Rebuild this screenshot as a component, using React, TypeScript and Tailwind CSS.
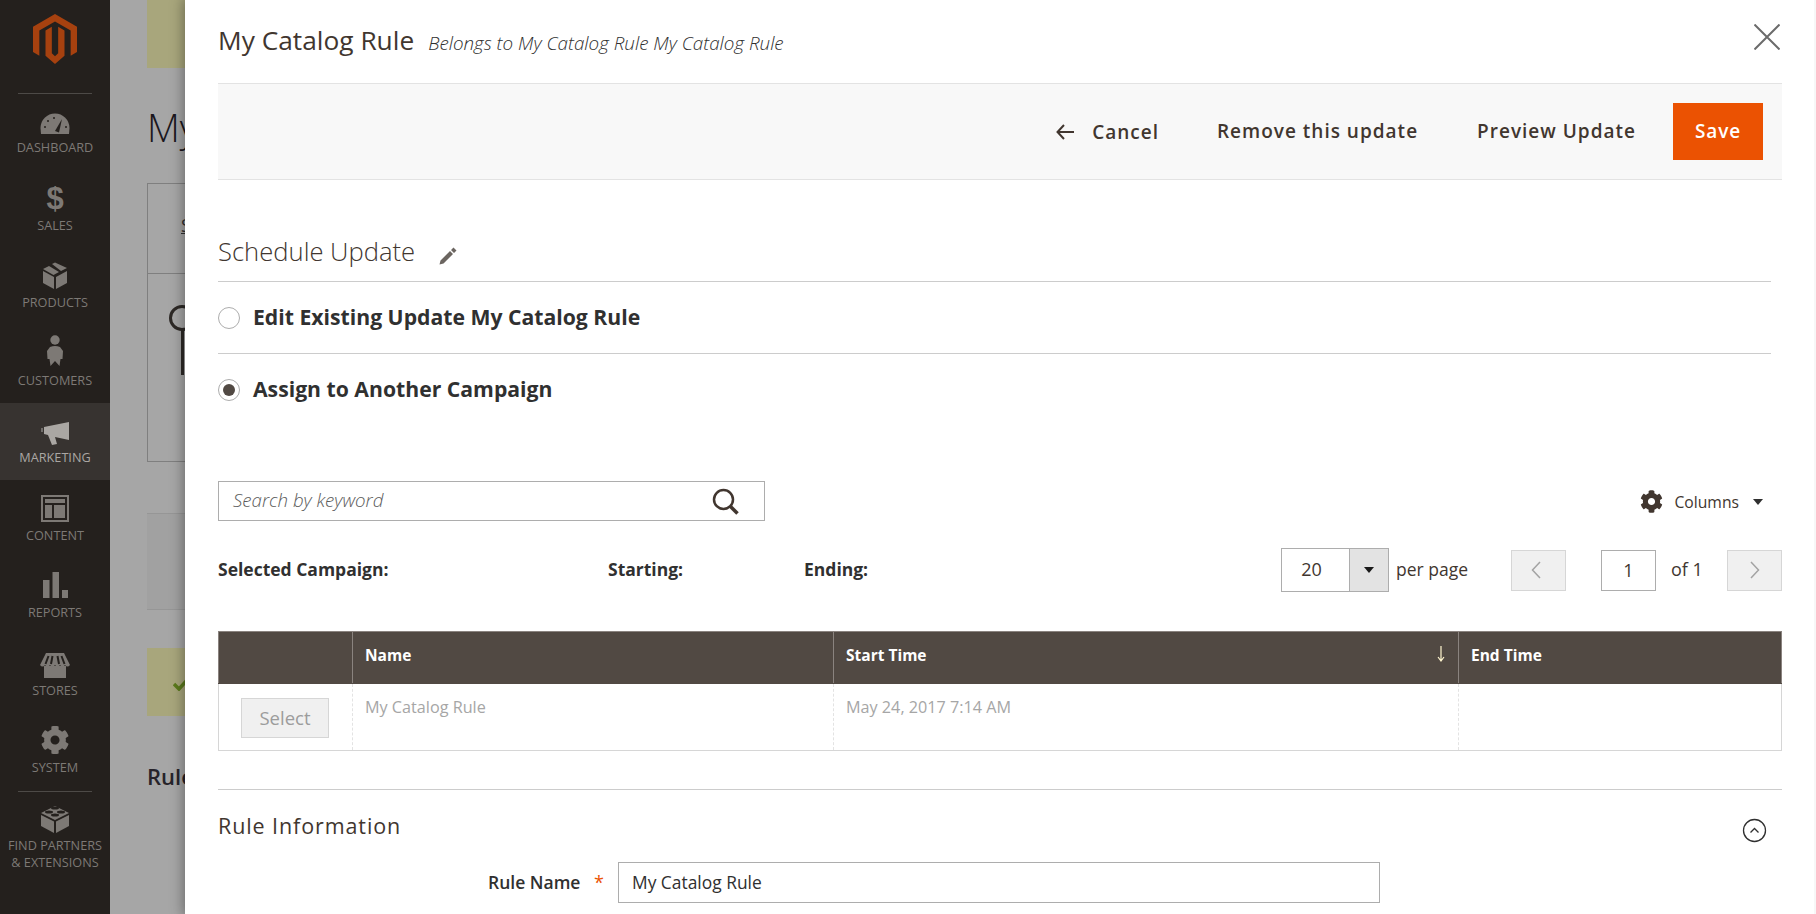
import React from "react";
import { FaCog } from "react-icons/fa";

const G = "#7d7975";
const BG = "#24201d";

function Ico({ h, children }: { h: number; children: React.ReactNode }) {
  return (
    <svg width="40" height={h} viewBox={`0 0 40 ${h}`} className="block shrink-0">
      {children}
    </svg>
  );
}

const items: { label: string; h: string; ih: number; icon: React.ReactNode; active?: boolean }[] = [
  {
    label: "Dashboard",
    h: "h-[77px]",
    ih: 45,
    icon: (
      <g>
        <path d="M6 40 L5.500 34 A14.500 14.500 0 0 1 34.500 34 L34 40 Z" fill={G} />
        <path d="M20 37 L27 25 L24 38.500 Z" fill={BG} />
        <circle cx="10" cy="33" r="1" fill={BG} />
        <circle cx="13" cy="27" r="1" fill={BG} />
        <circle cx="19" cy="24" r="1" fill={BG} />
        <circle cx="31" cy="33" r="1" fill={BG} />
      </g>
    ),
  },
  {
    label: "Sales",
    h: "h-[77px]",
    ih: 46,
    icon: (
      <text x="20" y="38" textAnchor="middle" fontSize="31" fontWeight="700" fontFamily="'Liberation Sans',sans-serif" fill={G}>
        $
      </text>
    ),
  },
  {
    label: "Products",
    h: "h-[78px]",
    ih: 46,
    icon: (
      <g fill={G}>
        <polygon points="8,21 14,18 24,24 18.500,27" />
        <polygon points="17,16 20,14.500 32,20 26,23" />
        <polygon points="8,23 19,29 19,41 8,35" />
        <polygon points="21,29 32,23 32,35 21,41" />
      </g>
    ),
  },
  {
    label: "Customers",
    h: "h-[77px]",
    ih: 46,
    icon: (
      <g fill={G}>
        <circle cx="20" cy="14" r="4.700" />
        <path d="M15 21 Q20 19 25 21 L28 25 L27.500 33 L25.500 33 L24.500 40 L20 35 L15.500 40 L14.500 33 L12.500 33 L12 25 Z" />
      </g>
    ),
  },
  {
    label: "Marketing",
    h: "h-[77px]",
    ih: 46,
    active: true,
    icon: (
      <g fill="#aaa7a3" transform="translate(5 0)">
        <polygon points="1.500,29 1.500,25 2.500,25 2.500,29" />
        <polygon points="4,24 29,19 29,37 15,34 17,41 12,42 8,32 4,31" />
      </g>
    ),
  },
  {
    label: "Content",
    h: "h-[77px]",
    ih: 47,
    icon: (
      <g fill={G}>
        <path fillRule="evenodd" d="M6 15 H34 V42 H6 Z M8 17 V40 H32 V17 Z" />
        <rect x="10" y="19" width="20" height="4" />
        <rect x="10" y="25" width="7" height="13" />
        <rect x="19" y="25" width="11" height="13" />
      </g>
    ),
  },
  {
    label: "Reports",
    h: "h-[77px]",
    ih: 47,
    icon: (
      <g fill={G}>
        <rect x="8" y="23" width="6.500" height="18" />
        <rect x="17.500" y="15" width="6.500" height="26" />
        <rect x="27" y="33" width="6" height="8" />
      </g>
    ),
  },
  {
    label: "Stores",
    h: "h-[77px]",
    ih: 48,
    icon: (
      <g>
        <polygon points="9,32 31,32 31,44 9,44" fill={G} />
        <path d="M11 19 H29 L35 31 Q32.500 34 30 31 Q27.500 34 25 31 Q22.500 34 20 31 Q17.500 34 15 31 Q12.500 34 10 31 Q7.500 34 5 31 Z" fill={G} />
        <path d="M13.500 22 L10.500 30 M17.500 22 L16 30 M22.500 22 L24 30 M26.500 22 L29.500 30" stroke={BG} strokeWidth="2" fill="none" />
      </g>
    ),
  },
  {
    label: "System",
    h: "h-[77px]",
    ih: 48,
    icon: <FaCog x={5.500} y={14.500} size={29} color={G} />,
  },
];

function Sidebar() {
  return (
    <aside className="w-[110px] shrink-0 h-full bg-[#24201d] flex flex-col">
      <div className="h-[94px] flex flex-col items-center">
        <svg width="44" height="50" viewBox="0 0 25 28.400" className="mt-[14px] block">
          <path fill="#a6410f" d="M12.500 0 L25 7.200 V21.600 L21.400 23.700 V9.300 L12.500 4.200 L3.600 9.300 V23.700 L0 21.600 V7.200 Z" />
          <path fill="#a6410f" d="M14.300 7.200 L17.900 9.300 V23.700 L12.500 28.400 L7.100 23.700 V9.300 L10.700 7.200 V22.300 L12.500 24 L14.300 22.300 Z" />
        </svg>
        <div className="mt-[29px] w-[74px] h-px bg-[#4d4a47]" />
      </div>
      {items.map((it) => (
        <div key={it.label} className={`${it.h} flex flex-col items-center ${it.active ? "bg-[#373330]" : ""}`}>
          <Ico h={it.ih}>{it.icon}</Ico>
          <span className={`text-[12.700px] leading-[17px] uppercase ${it.active ? "text-[#aaa7a3]" : "text-[#7d7975]"}`}>{it.label}</span>
        </div>
      ))}
      <div className="mx-auto mt-[3px] w-[74px] h-px bg-[#4d4a47]" />
      <svg width="30" height="30" viewBox="0 0 30 30" className="mx-auto mt-[11px] block">
        <g fill={G}>
          <polygon points="1,10 15,3 29,10 15,17" />
          <polygon points="1,12 14,18.500 14,30 1,23" />
          <polygon points="16,18.500 29,12 29,23 16,30" />
        </g>
        <g fill={BG}>
          <ellipse cx="15" cy="5" rx="4" ry="1.500" />
          <ellipse cx="9" cy="9" rx="4" ry="1.500" />
          <ellipse cx="21" cy="9" rx="4" ry="1.500" />
          <ellipse cx="15" cy="12" rx="4" ry="1.500" />
        </g>
      </svg>
      <div className="text-[12.700px] leading-[17px] text-[#7d7975] text-center mt-[4px]">
        FIND PARTNERS
        <br />
        &amp; EXTENSIONS
      </div>
    </aside>
  );
}

function Backdrop() {
  return (
    <div className="w-[75px] shrink-0 h-full bg-[#a6a6a6] overflow-hidden pl-[37px]">
      <div className="w-[200px] h-[68px] bg-[#a8a67c]" />
      <div className="mt-[36px] text-[38px] leading-[46px] font-light text-[#1a171d] whitespace-nowrap">My Catalog</div>
      <div className="mt-[33px] w-[200px] h-[279px] border border-[#7f7f7f]">
        <div className="h-[90px] border-b border-[#7f7f7f] pl-[33px] pt-[29px] text-[18px] leading-[24px] text-[#303030] underline">
          Schedule
        </div>
        <svg width="38" height="70" viewBox="0 0 38 70" className="ml-[18px] mt-[31px] block">
          <circle cx="16" cy="13" r="11.500" fill="none" stroke="#2d2926" strokeWidth="3" />
          <rect x="15" y="24" width="3" height="60" fill="#2d2926" />
        </svg>
      </div>
      <div className="mt-[51px] w-[200px] h-[97px] bg-[#a1a1a1] border-y border-[#969696]" />
      <div className="mt-[38px] w-[200px] h-[68px] bg-[#a8a67c] pl-[26px] pt-[29px]">
        <svg width="16" height="14" viewBox="0 0 16 14" className="block">
          <path d="M1 7 L6 12 L15 2" fill="none" stroke="#5b7a1c" strokeWidth="3.500" />
        </svg>
      </div>
      <div className="mt-[47px] text-[22px] leading-[27px] font-semibold text-[#26232a] whitespace-nowrap">Rule Information</div>
    </div>
  );
}

function TextBtn({ children }: { children: React.ReactNode }) {
  return <span className="text-[19px] font-semibold tracking-[1px] text-[#41362f] leading-[24px]">{children}</span>;
}

function Modal() {
  return (
    <main className="relative z-10 flex-1 min-w-0 h-full bg-white shadow-[0_0_12px_2px_rgba(0,0,0,0.35)] border-r-2 border-r-[#f7f7f7] pl-[33px] pr-[32px] text-[#303030]">
      <header className="h-[83px] flex items-start justify-between">
        <div className="flex items-baseline pt-[23px]">
          <span className="text-[26.300px] leading-[35px] font-normal text-[#41362f]">My Catalog Rule</span>
          <span className="ml-[14px] text-[18.800px] leading-[24px] italic font-light text-[#303030]">
            Belongs to My Catalog Rule My Catalog Rule
          </span>
        </div>
        <svg width="26" height="26" viewBox="0 0 26 26" className="mt-[24px] mr-[2px] block">
          <path d="M0.500 0.500 L25.500 25.500 M25.500 0.500 L0.500 25.500" stroke="#6b6b6b" strokeWidth="2" fill="none" />
        </svg>
      </header>

      <div className="h-[97px] bg-[#f8f8f8] border-y border-[#e3e3e3] flex items-center justify-end pr-[19px]">
        <svg width="19" height="16" viewBox="0 0 19 16" className="block mr-[17px]">
          <path d="M8 1 L1.500 8 L8 15 M2 8 H18" stroke="#41362f" strokeWidth="2" fill="none" />
        </svg>
        <TextBtn>Cancel</TextBtn>
        <span className="ml-[58px]">
          <TextBtn>Remove this update</TextBtn>
        </span>
        <span className="ml-[59px]">
          <TextBtn>Preview Update</TextBtn>
        </span>
        <button className="ml-[37px] w-[90px] h-[57px] bg-[#eb5202] text-white text-[19px] font-semibold tracking-[0.9px]">Save</button>
      </div>

      <div className="mr-[11px]">
        <div className="h-[102px] border-b border-[#cccccc] flex items-end pb-[13px]">
          <span className="text-[25.600px] leading-[32px] font-light text-[#41362f]">Schedule Update</span>
          <svg width="18" height="18" viewBox="0 0 18 18" className="ml-[24px] mb-[3px] block">
            <path d="M0.500 17.500 L1.500 13.500 L11 4 L14 7 L4.500 16.500 Z M12 3 L14.500 0.500 L17.500 3.500 L15 6 Z" fill="#6b6560" />
          </svg>
        </div>
        <label className="h-[72px] border-b border-[#cccccc] flex items-center">
          <span className="w-[22px] h-[22px] rounded-full border border-[#adadad] bg-white shrink-0" />
          <span className="ml-[13px] pb-[2px] text-[21.200px] font-bold text-[#303030]">Edit Existing Update My Catalog Rule</span>
        </label>
        <label className="h-[71px] flex items-center">
          <span className="w-[22px] h-[22px] rounded-full border border-[#adadad] bg-white shrink-0 flex items-center justify-center">
            <span className="w-[12px] h-[12px] rounded-full bg-[#514943]" />
          </span>
          <span className="ml-[13px] pb-[2px] text-[21.200px] font-bold text-[#303030]">Assign to Another Campaign</span>
        </label>
      </div>

      <div className="mt-[56px] h-[40px] flex items-start justify-between">
        <div className="w-[547px] h-[40px] border border-[#adadad] flex items-center justify-between pl-[14px] pr-[25px]">
          <span className="pb-[2px] text-[18.700px] italic font-light text-[#5b5b5b]">Search by keyword</span>
          <svg width="27" height="27" viewBox="0 0 27 27" className="block">
            <circle cx="11.500" cy="11.500" r="9.500" fill="none" stroke="#41362f" strokeWidth="2.500" />
            <path d="M18 18 L25.500 25.500" stroke="#41362f" strokeWidth="3.500" />
          </svg>
        </div>
        <div className="flex items-center pr-[19px] mt-[9px]">
          <FaCog size={23} color="#41362f" />
          <span className="ml-[11px] text-[15.700px] leading-[22px] text-[#41362f]">Columns</span>
          <span className="ml-[14px] w-0 h-0 border-x-[5px] border-x-transparent border-t-[6px] border-t-[#303030]" />
        </div>
      </div>

      <div className="mt-[27px] h-[44px] flex items-center">
        <span className="w-[390px] pb-[2px] text-[17.500px] font-bold">Selected Campaign:</span>
        <span className="w-[196px] pb-[2px] text-[17.500px] font-bold">Starting:</span>
        <span className="w-[477px] pb-[2px] text-[17.500px] font-bold">Ending:</span>
        <div className="w-[108px] h-[44px] border border-[#adadad] flex">
          <span className="w-[67px] flex items-center justify-center pr-[8px] pb-[2px] text-[18px] text-[#41362f]">20</span>
          <span className="flex-1 bg-[#e3e3e3] border-l border-[#adadad] flex items-center justify-center">
            <span className="w-0 h-0 border-x-[5px] border-x-transparent border-t-[6px] border-t-[#1a1a1a]" />
          </span>
        </div>
        <span className="ml-[7px] w-[115px] pb-[2px] text-[17.500px] text-[#41362f]">per page</span>
        <button className="w-[55px] h-[41px] bg-[#f0f0f0] border border-[#d6d6d6] flex items-center justify-center pr-[5px]">
          <svg width="10" height="18" viewBox="0 0 10 18" className="block">
            <path d="M9 1 L1.500 9 L9 17" stroke="#a3a3a3" strokeWidth="1.500" fill="none" />
          </svg>
        </button>
        <span className="ml-[35px] w-[55px] h-[41px] border border-[#adadad] flex items-center justify-center text-[18px] text-[#41362f]">1</span>
        <span className="ml-[15px] w-[56px] pb-[1px] text-[18px] text-[#41362f]">of 1</span>
        <button className="w-[55px] h-[41px] bg-[#f0f0f0] border border-[#d6d6d6] flex items-center justify-center">
          <svg width="10" height="18" viewBox="0 0 10 18" className="block">
            <path d="M1 1 L8.500 9 L1 17" stroke="#a3a3a3" strokeWidth="1.500" fill="none" />
          </svg>
        </button>
      </div>

      <table className="mt-[39px] w-full table-fixed border-collapse">
        <colgroup>
          <col className="w-[134px]" />
          <col className="w-[481px]" />
          <col className="w-[625px]" />
          <col />
        </colgroup>
        <thead>
          <tr className="h-[52px] bg-[#514943] text-white text-[15.500px] text-left">
            <th className="border border-[#8a837f] border-b-[#514943]" />
            <th className="border border-[#8a837f] border-b-[#514943] pl-[12px] pb-[4px] font-bold">Name</th>
            <th className="border border-[#8a837f] border-b-[#514943] pl-[12px] pb-[4px] font-bold relative">
              Start Time
              <svg width="8" height="16" viewBox="0 0 8 16" className="absolute right-[13px] top-[14px] block">
                <path d="M4 0 V15 M1 11 L4 15 L7 11" stroke="#fff6cf" strokeWidth="1.200" fill="none" />
              </svg>
            </th>
            <th className="border border-[#8a837f] border-b-[#514943] pl-[12px] pb-[4px] font-bold">End Time</th>
          </tr>
        </thead>
        <tbody>
          <tr className="h-[67px] text-[16.200px] text-[#a6a6a6] align-top">
            <td className="border-y border-l border-r border-[#d6d6d6] border-r-[#e3e3e3] [border-right-style:dashed] pt-[14px]">
              <button className="block ml-[22px] w-[88px] h-[40px] bg-[#f0f0f0] border border-[#d6d6d6] text-[18.500px] text-[#9c9c9c] font-normal">Select</button>
            </td>
            <td className="border-y border-r border-[#d6d6d6] border-r-[#e3e3e3] [border-right-style:dashed] pl-[12px] pt-[11px]">My Catalog Rule</td>
            <td className="border-y border-r border-[#d6d6d6] border-r-[#e3e3e3] [border-right-style:dashed] pl-[12px] pt-[11px]">May 24, 2017 7:14 AM</td>
            <td className="border-y border-r border-[#d6d6d6]" />
          </tr>
        </tbody>
      </table>

      <div className="mt-[38px] h-[73px] border-t border-[#cccccc] flex items-start justify-between">
        <span className="mt-[22px] text-[21.500px] leading-[27px] font-normal tracking-[0.9px] text-[#41362f]">Rule Information</span>
        <svg width="25" height="25" viewBox="0 0 25 25" className="mt-[28px] mr-[15px] block">
          <circle cx="12.500" cy="12.500" r="11" fill="none" stroke="#303030" strokeWidth="1.300" />
          <path d="M8.500 14.500 L12.500 10.500 L16.500 14.500" fill="none" stroke="#303030" strokeWidth="1.300" />
        </svg>
      </div>

      <div className="flex items-center h-[41px]">
        <span className="ml-[270px] w-[93px] text-[17.500px] font-semibold text-[#303030] whitespace-nowrap">Rule Name</span>
        <span className="ml-[13px] w-[24px] text-[18px] text-[#eb5202]">*</span>
        <span className="w-[762px] h-[41px] border border-[#adadad] flex items-center pl-[13px] text-[17.400px] text-[#303030]">My Catalog Rule</span>
      </div>
    </main>
  );
}

export default function App() {
  return (
    <div className="w-[1816px] h-[914px] overflow-hidden flex font-['Open_Sans',sans-serif]">
      <Sidebar />
      <Backdrop />
      <Modal />
    </div>
  );
}
